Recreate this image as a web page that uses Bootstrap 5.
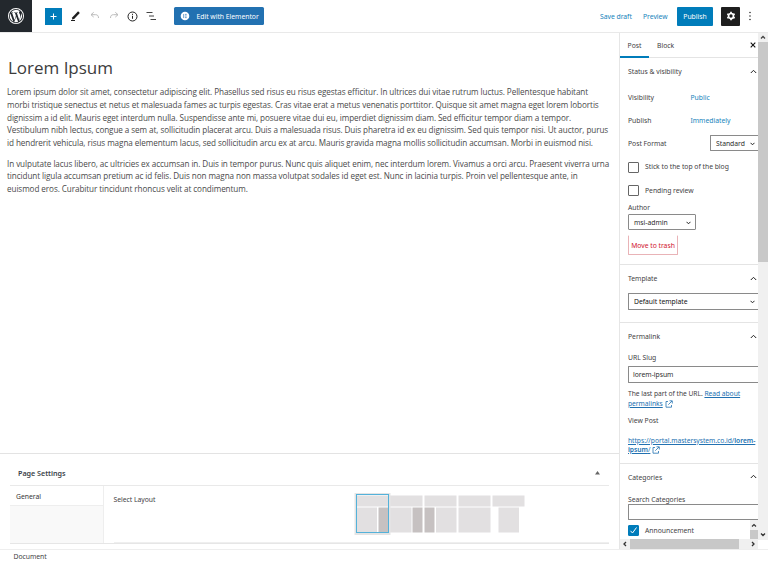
<!DOCTYPE html>
<html lang="en">
<head>
<meta charset="utf-8">
<title>Edit Post</title>
<meta name="viewport" content="width=device-width, initial-scale=1">
<link href="https://cdn.jsdelivr.net/npm/bootstrap@5.3.0/dist/css/bootstrap.min.css" rel="stylesheet">
<style>
body{font-family:"Noto Sans","Open Sans",sans-serif;font-size:6.8px;line-height:10px;letter-spacing:-.02px;color:#3f4144;background:#fff;width:768px;height:562px}
svg{display:block;flex:none}
a{color:#2271b1}
.topbar{height:33px;border-bottom:1px solid #e9e9e9}
.wp-logo{width:32px;height:32px;background:#23282d}
.add-btn{width:17px;height:17px;background:#007cba;margin-left:12.5px}
.elementor-btn{width:90px;height:18px;margin-left:17px;background:#2271b1;border-radius:1.5px;color:#fff;padding-left:6px;gap:7px}
.elementor-btn span{padding-top:1px}
.blue{color:#1583bb}
.publish-btn{width:36px;height:19px;background:#007cba;color:#fff;border-radius:1px}
.gear-btn{width:19px;height:19px;background:#1e1e1e;border-radius:1px}
.workspace{height:516px}
.editor{width:619px}
.canvas{height:420px;padding:24px 0 0 7px;font-family:"Open Sans",sans-serif;color:#4a4a4a}
.post-title{font-family:"Open Sans",sans-serif;font-size:17px;line-height:22px;font-weight:400;margin:0 0 7px 1px;color:#3c3c3c}
.canvas p{font-size:8.15px;letter-spacing:-.077px;line-height:12.8px;margin:0 0 7.6px;white-space:nowrap}
.metabox{height:96px;border-top:1px solid #e3e3e3;padding:8px 10px 0 10px}
.meta-head{height:24px;padding:0 9px 1px 8px;color:#3c434a;font-weight:600;font-size:7.2px;border-bottom:1px solid #e9e9e9}
.meta-body{height:58px;border-bottom:1px solid #e6e6e6}
.meta-nav{width:93.5px;background:#f9f9f9;border-right:1px solid #eee}
.meta-nav div{height:20px;background:#fff;border-bottom:1px solid #eee;padding:2px 0 0 6px;color:#333}
.meta-field{margin-left:10px;padding-right:10px;border-bottom:1px solid #efefef}
.inspector{width:139px;height:516px;border-left:1px solid #e6e6e6;overflow:hidden;white-space:nowrap}
.tabs{height:25px;border-bottom:1px solid #e4e4e4}
.tabs .tab-on{width:29px;height:25px;border-bottom:2px solid #007cba;padding-top:2px}
.panel{border-bottom:1px solid #e4e4e4;padding-left:8px;overflow:hidden;flex:none}
.line{display:flex;align-items:center}
.drop{padding-top:1px}
.panel-title{padding-right:1.5px}
.lab{width:62.5px}
.field{border:1px solid #8a8a8a;border-radius:1px;background:#fff;display:flex;align-items:center;color:#2c2c2c}
.cut{border-right:0;border-radius:1px 0 0 1px}
.check{width:11px;height:11px;border:1px solid #666;border-radius:1px;margin-right:6px;flex:none}
.check-on{background:#007cba;border-color:#007cba}
.trash{width:50px;height:20px;border:1px solid #e9b3b7;border-top-color:#fff;border-radius:1px;color:#d0142c;margin-top:5px;padding-top:2px}
.post-url{font-size:6.7px;letter-spacing:-.03px}
.vscroll{width:10px;height:507px;background:#f0f0f0}
.hscroll{background:#f0f0f0}
.thumb{background:#c8c8c8}
.footer{height:13px;padding:2px 0 0 13.5px;border-top:1px solid #eee}
</style>
</head>
<body class="overflow-hidden">
<header class="topbar d-flex align-items-center">
  <div class="wp-logo d-flex align-items-center justify-content-center">
    <svg width="18" height="18" viewBox="0 0 24 24" fill="#fff"><path d="M12 1.300a10.700 10.700 0 1 0 0 21.400 10.700 10.700 0 0 0 0-21.400zm0 1.200a9.500 9.500 0 1 1 0 19 9.500 9.500 0 0 1 0-19z"/><path d="M3.700 12a8.300 8.300 0 0 0 4.700 7.500L4.400 8.600A8.200 8.200 0 0 0 3.700 12zm13.900-.4c0-1-.4-1.700-.7-2.300-.4-.7-.9-1.300-.9-2 0-.8.6-1.500 1.400-1.500A8.300 8.300 0 0 0 5.100 7.400h.5c.9 0 2.200-.1 2.200-.1.5 0 .5.6.1.700 0 0-.5.1-1 .1l3.100 9.300 1.900-5.600-1.300-3.700-.9-.1c-.5 0-.4-.7 0-.7 0 0 1.400.1 2.200.1.900 0 2.200-.1 2.200-.1.500 0 .5.6.1.700 0 0-.5.1-1 .1l3.100 9.200.9-2.800c.3-1.200.4-2.100.4-2.900zm-5.400 1.100-2.500 7.200a8.300 8.300 0 0 0 5.100-.1zm7.100-4.700c.1 1-.1 2.200-.6 3.400l-2.500 7.300A8.300 8.300 0 0 0 19.300 8z"/></svg>
  </div>
  <div class="add-btn d-flex align-items-center justify-content-center"><svg width="7" height="7" viewBox="0 0 7 7" stroke="#fff" stroke-width="1"><path d="M3.500 .5v6M.5 3.500h6"/></svg></div>
  <svg class="ms-2" width="12" height="12" viewBox="0 0 12 12"><path d="M2.400 7.300 8.100 1.300l1.700 1.600-5.700 6-2.200.5z" fill="#1e1e1e"/><path d="M1 10.500h4" stroke="#1e1e1e"/></svg>
  <svg width="10" height="10" viewBox="0 0 10 10" fill="none" stroke="#bbb" style="margin-left:8px"><path d="M3.700 1.300 1 3.700l2.700 2.400M1 3.700h4.500c2 0 3 1 3 3.300"/></svg>
  <svg width="10" height="10" viewBox="0 0 10 10" fill="none" stroke="#bbb" style="margin-left:9px"><path d="M6.300 1.300 9 3.700 6.300 6.100M9 3.700H4.500c-2 0-3 1-3 3.300"/></svg>
  <svg width="11" height="11" viewBox="0 0 11 11" fill="none" stroke="#222" style="margin-left:8px"><circle cx="5.500" cy="5.500" r="4.500"/><path d="M5.500 4.800v3M5.500 2.800v1.100"/></svg>
  <svg width="11" height="10" viewBox="0 0 11 10" stroke="#444" style="margin-left:8px"><path d="M.5 1.500h6M3 5h5M4.500 8.500H10"/></svg>
  <div class="elementor-btn d-flex align-items-center"><svg width="10" height="10" viewBox="0 0 10 10"><circle cx="5" cy="5" r="4.300" fill="#fff"/><path d="M3.700 3v4M5 3.400h1.700M5 5h1.700M5 6.600h1.700" stroke="#5d97c6" stroke-width=".9"/></svg><span>Edit with Elementor</span></div>
  <div class="ms-auto d-flex align-items-center blue">
    <span class="drop" style="width:43px">Save draft</span><span class="drop" style="width:34px">Preview</span>
    <div class="publish-btn drop d-flex align-items-center justify-content-center">Publish</div>
    <div class="gear-btn d-flex align-items-center justify-content-center" style="margin-left:8px"><svg width="10" height="10" viewBox="0 0 10 10"><circle cx="5" cy="5" r="2.500" fill="none" stroke="#fff" stroke-width="1.700"/><path d="M5 .7v1.500M5 7.800v1.500M1.300 2.900l1.300.7M7.400 6.400l1.300.7M1.300 7.100l1.300-.7M7.400 3.600l1.300-.7" stroke="#fff" stroke-width="1.700"/></svg></div>
    <svg width="4" height="10" viewBox="0 0 4 10" fill="#333" style="margin:0 16px 0 8px"><circle cx="2" cy="1.500" r=".8"/><circle cx="2" cy="5" r=".8"/><circle cx="2" cy="8.500" r=".8"/></svg>
  </div>
</header>
<div class="workspace d-flex">
  <main class="editor">
    <div class="canvas">
      <h1 class="post-title">Lorem Ipsum</h1>
      <p>Lorem ipsum dolor sit amet, consectetur adipiscing elit. Phasellus sed risus eu risus egestas efficitur. In ultrices dui vitae rutrum luctus. Pellentesque habitant<br>morbi tristique senectus et netus et malesuada fames ac turpis egestas. Cras vitae erat a metus venenatis porttitor. Quisque sit amet magna eget lorem lobortis<br>dignissim a id elit. Mauris eget interdum nulla. Suspendisse ante mi, posuere vitae dui eu, imperdiet dignissim diam. Sed efficitur tempor diam a tempor.<br>Vestibulum nibh lectus, congue a sem at, sollicitudin placerat arcu. Duis a malesuada risus. Duis pharetra id ex eu dignissim. Sed quis tempor nisi. Ut auctor, purus<br>id hendrerit vehicula, risus magna elementum lacus, sed sollicitudin arcu ex at arcu. Mauris gravida magna mollis sollicitudin accumsan. Morbi in euismod nisi.</p>
      <p>In vulputate lacus libero, ac ultricies ex accumsan in. Duis in tempor purus. Nunc quis aliquet enim, nec interdum lorem. Vivamus a orci arcu. Praesent viverra urna<br>tincidunt ligula accumsan pretium ac id felis. Duis non magna non massa volutpat sodales id eget est. Nunc in lacinia turpis. Proin vel pellentesque ante, in<br>euismod eros. Curabitur tincidunt rhoncus velit at condimentum.</p>
    </div>
    <section class="metabox">
      <div class="meta-head d-flex align-items-center justify-content-between"><span>Page Settings</span><svg width="5" height="4" viewBox="0 0 5 4" style="margin-bottom:1px"><path d="M2.500 0 5 3.500H0z" fill="#666"/></svg></div>
      <div class="meta-body d-flex">
        <div class="meta-nav"><div class="d-flex align-items-center">General</div></div>
        <div class="meta-field flex-fill d-flex"><span style="width:240px;padding-top:9px">Select Layout</span>
          <svg width="180" height="46" viewBox="0 0 180 46" style="margin-top:7px">
            <g fill="#e2e0e1"><path d="M3 2.500h31.500v11H3zM36.500 2.500h32v11H36.500zM70.500 2.500h32v11H70.500zM104.500 2.500h32v11h-32zM138.500 2.500h32v11h-32z"/><path d="M3 14.500h20v25H3zM36.500 14.500h21v25H36.500zM82 14.500h20.500v25H82zM104.500 14.500h32v25h-32zM144.500 14.500H165v25h-20.500z"/></g>
            <path d="M24.500 14.500h10v25h-10zM58.500 14.500h10v25h-10zM70.500 14.500h10v25h-10z" fill="#c6c1c1"/>
            <rect x="1.500" y="1" width="34" height="40" fill="none" stroke="#777" stroke-opacity=".2" stroke-width="2"/>
            <rect x="2.500" y="1.500" width="32" height="38" fill="none" stroke="#54b2da"/>
          </svg>
        </div>
      </div>
    </section>
  </main>
  <aside class="inspector d-flex flex-column">
    <div class="tabs d-flex flex-none"><div class="tab-on d-flex align-items-center justify-content-center">Post</div><div class="d-flex align-items-center drop" style="margin-left:8px">Block</div><svg class="ms-auto align-self-center" width="6" height="6" viewBox="0 0 6 6" stroke="#111" stroke-width="1.100" style="margin-right:2px"><path d="M.7.7l4.600 4.600M5.300.7.7 5.300"/></svg></div>
    <section class="panel" style="height:207px">
      <div class="line panel-title justify-content-between" style="height:28px"><span>Status &amp; visibility</span><svg width="7" height="5" viewBox="0 0 7 5" fill="none" stroke="#222" style="margin-bottom:2px"><path d="M.8 4 3.500 1.300 6.200 4"/></svg></div>
      <div class="line drop" style="height:22px"><span class="lab">Visibility</span><span class="blue">Public</span></div>
      <div class="line" style="height:25px"><span class="lab">Publish</span><span class="blue">Immediately</span></div>
      <div class="line justify-content-between" style="height:20px"><span class="drop">Post Format</span><div class="field cut" style="width:48px;height:16px;padding:1px 0 0 5px">Standard<svg width="5" height="4" viewBox="0 0 5 4" fill="none" stroke="#222" style="margin-left:5px"><path d="M.5.8 2.500 2.800 4.500.8"/></svg></div></div>
      <div class="line" style="height:28px"><span class="check"></span>Stick to the top of the blog</div>
      <div class="line" style="height:19px"><span class="check"></span>Pending review</div>
      <div class="line" style="height:14px"><span class="drop">Author</span></div>
      <div class="field justify-content-between" style="width:67.500px;height:16px;padding:1px 4px 0 5px">msi-admin<svg width="5" height="4" viewBox="0 0 5 4" fill="none" stroke="#222"><path d="M.5.8 2.500 2.800 4.500.8"/></svg></div>
      <div class="trash d-flex align-items-center justify-content-center">Move to trash</div>
    </section>
    <section class="panel" style="height:58px">
      <div class="line panel-title justify-content-between" style="height:28px"><span>Template</span><svg width="7" height="5" viewBox="0 0 7 5" fill="none" stroke="#222" style="margin-bottom:2px"><path d="M.8 4 3.500 1.300 6.200 4"/></svg></div>
      <div class="field cut justify-content-between" style="height:17px;padding:0 3px 0 5px;color:#111">Default template<svg width="5" height="4" viewBox="0 0 5 4" fill="none" stroke="#222"><path d="M.5.8 2.500 2.800 4.500.8"/></svg></div>
    </section>
    <section class="panel" style="height:141px">
      <div class="line panel-title justify-content-between" style="height:28px"><span>Permalink</span><svg width="7" height="5" viewBox="0 0 7 5" fill="none" stroke="#222" style="margin-bottom:2px"><path d="M.8 4 3.500 1.300 6.200 4"/></svg></div>
      <div style="height:15px;padding-top:2px">URL Slug</div>
      <div class="field cut" style="height:17px;padding-left:4px;padding-top:1px">lorem-ipsum</div>
      <div class="post-url" style="padding-top:5.500px">The last part of the URL. <a href="#">Read about</a></div>
      <div class="post-url d-flex align-items-center"><a href="#">permalinks</a><svg width="8" height="8" viewBox="0 0 8 8" fill="none" stroke="#2271b1" stroke-width=".8" style="margin-left:2px"><path d="M3 1.500H1v5.700h5.500V5M4.500.8H7.300V3.500M7 1 3.300 4.700"/></svg></div>
      <div style="padding-top:7px">View Post</div>
      <div class="post-url" style="padding-top:10px"><a href="#">https://portal.mastersystem.co.id/<b class="fw-semibold">lorem-</b></a></div>
      <div class="post-url d-flex align-items-center" style="height:9px"><a href="#"><b class="fw-semibold">ipsum</b>/</a><svg width="8" height="8" viewBox="0 0 8 8" fill="none" stroke="#2271b1" stroke-width=".8" style="margin-left:2px"><path d="M3 1.500H1v5.700h5.500V5M4.500.8H7.300V3.500M7 1 3.300 4.700"/></svg></div>
    </section>
    <section class="panel border-0 d-flex flex-column" style="height:75px">
      <div class="line panel-title justify-content-between" style="height:27px"><span>Categories</span><svg width="7" height="5" viewBox="0 0 7 5" fill="none" stroke="#222" style="margin-bottom:2px"><path d="M.8 4 3.500 1.300 6.200 4"/></svg></div>
      <div style="height:13px;padding-top:4px">Search Categories</div>
      <div class="field cut flex-shrink-0" style="height:16px"></div>
      <div class="d-flex justify-content-between" style="height:19px"><div class="line" style="height:21px"><span class="check check-on"><svg width="9" height="9" viewBox="0 0 9 9" fill="none" stroke="#fff"><path d="M1.500 4.800 3.500 7 7.500 1.500"/></svg></span><span class="drop">Announcement</span></div>
        <div class="d-flex flex-column align-items-center hscroll" style="width:8px;height:19px"><svg width="6" height="10" viewBox="0 0 6 10" fill="none" stroke="#333" stroke-width="1.200"><path d="M1 6.500 3 4.500 5 6.500"/></svg><span class="thumb w-100 flex-fill"></span></div></div>
    </section>
    <div class="hscroll d-flex align-items-center" style="height:10px"><svg width="10" height="10" viewBox="0 0 10 10" fill="none" stroke="#333" stroke-width="1.300"><path d="M6 3 4 5 6 7"/></svg><span class="thumb h-100" style="width:109px"></span><svg class="ms-auto" width="10" height="10" viewBox="0 0 10 10" fill="none" stroke="#333" stroke-width="1.300"><path d="M4 3 6 5 4 7"/></svg></div>
  </aside>
  <div class="vscroll d-flex flex-column"><svg width="10" height="9" viewBox="0 0 10 9" fill="none" stroke="#444" stroke-width="1.300"><path d="M3 5.500 5 3.500 7 5.500"/></svg><span class="thumb" style="height:220px"></span><svg class="mt-auto" width="10" height="10" viewBox="0 0 10 10" fill="none" stroke="#333" stroke-width="1.300"><path d="M3 3.500 5 5.500 7 3.500"/></svg></div>
</div>
<footer class="footer">Document</footer>
<script src="https://cdn.jsdelivr.net/npm/bootstrap@5.3.0/dist/js/bootstrap.bundle.min.js"></script>
</body>
</html>
